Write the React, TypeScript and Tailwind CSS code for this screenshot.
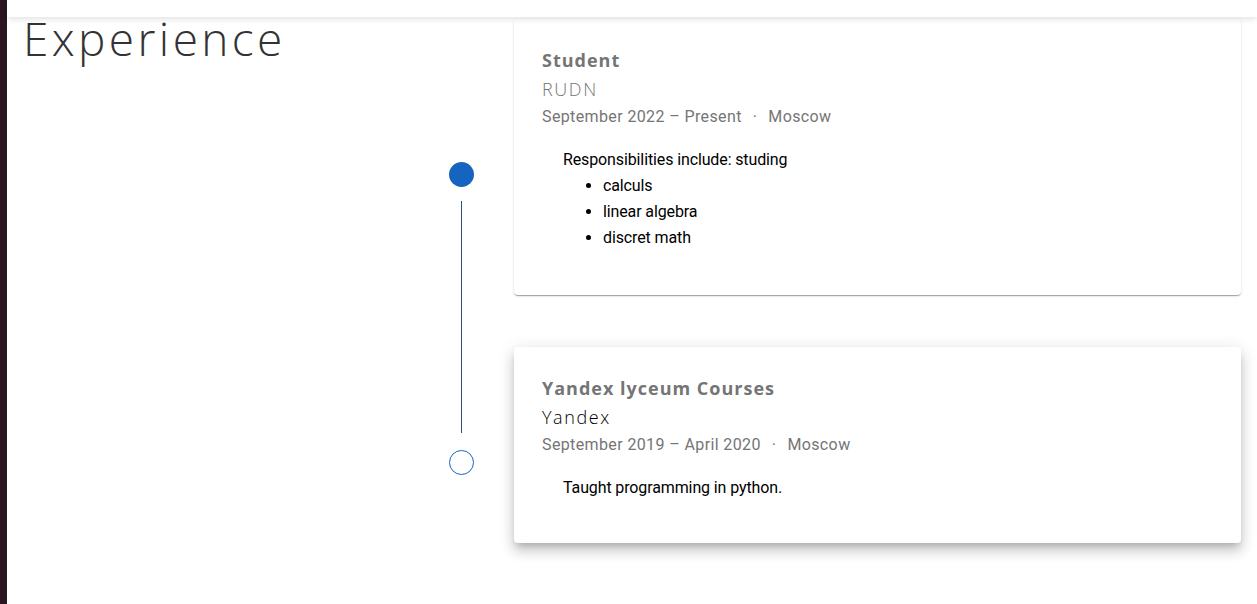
const jobs = [
  {
    title: "Student",
    company: "RUDN",
    companyTone: "text-[#757575]",
    period: "September 2022 – Present",
    place: "Moscow",
    text: "Responsibilities include: studing",
    items: ["calculs", "linear algebra", "discret math"],
    shadow:
      "shadow-[0_2px_1px_-1px_rgba(0,0,0,0.2),0_1px_1px_0_rgba(0,0,0,0.14),0_1px_3px_0_rgba(0,0,0,0.12)]",
  },
  {
    title: "Yandex lyceum Courses",
    company: "Yandex",
    companyTone: "text-black",
    period: "September 2019 – April 2020",
    place: "Moscow",
    text: "Taught programming in python.",
    items: [] as string[],
    shadow:
      "shadow-[0_5px_6px_-3px_rgba(0,0,0,0.18),0_9px_12px_1px_rgba(0,0,0,0.12),0_3px_16px_2px_rgba(0,0,0,0.1)]",
  },
];

export default function App() {
  return (
    <div className="flex h-[604px] w-[1257px] overflow-hidden bg-white font-['Roboto',sans-serif]">
      {/* dark desktop edge */}
      <div className="w-[7px] shrink-0 bg-[#2a1520]" />

      <div className="relative flex flex-1 flex-col">
        {/* top bar */}
        <div className="relative z-10 h-[17px] shrink-0 bg-white shadow-[0_2px_6px_rgba(0,0,0,0.12)]" />

        <div className="flex">
          {/* heading column */}
          <div className="w-[429px] shrink-0 pl-[16px]">
            <h1 className="-mt-[2px] font-['Open_Sans',sans-serif] text-[46px] font-light leading-[46px] tracking-[3.4px] text-[#333333]">
              Experience
            </h1>
          </div>

          {/* timeline */}
          <div className="flex w-[50px] shrink-0 flex-col items-center pt-[145px]">
            <div className="h-[25px] w-[25px] rounded-full bg-[#1565c0]" />
            <div className="mt-[14px] h-[232px] w-px bg-[#2b4f7e]" />
            <div className="mt-[17px] h-[25px] w-[25px] rounded-full border border-[#1565c0] bg-white" />
          </div>

          {/* cards */}
          <div className="ml-[28px] mt-[2px] flex w-[727px] flex-col gap-[52px]">
            {jobs.map((job) => (
              <div
                key={job.title}
                className={`rounded-[4px] bg-white px-[28px] pb-[28px] pt-[28px] ${job.shadow}`}
              >
                <h3 className="font-['Open_Sans',sans-serif] text-[18px] font-bold leading-[27px] tracking-[1px] text-[#757575]">
                  {job.title}
                </h3>
                <div
                  className={`mt-[1px] font-['Open_Sans',sans-serif] text-[18px] font-light leading-[28px] tracking-[1.6px] ${job.companyTone}`}
                >
                  {job.company}
                </div>
                <div className="mt-[2px] text-[16px] leading-[24px] tracking-[0.38px] text-[#757575]">
                  {job.period}
                  <span className="mx-[11px]">·</span>
                  {job.place}
                </div>
                <div className="mt-[18px] pl-[21px] text-[16px] leading-[26px] tracking-[-0.12px] text-black">
                  <p className={job.items.length ? "" : "mb-[14px]"}>{job.text}</p>
                  {job.items.length > 0 && (
                    <ul className="mb-[16px] list-disc pl-[40px]">
                      {job.items.map((it) => (
                        <li key={it}>{it}</li>
                      ))}
                    </ul>
                  )}
                </div>
              </div>
            ))}
          </div>
        </div>
      </div>
    </div>
  );
}
